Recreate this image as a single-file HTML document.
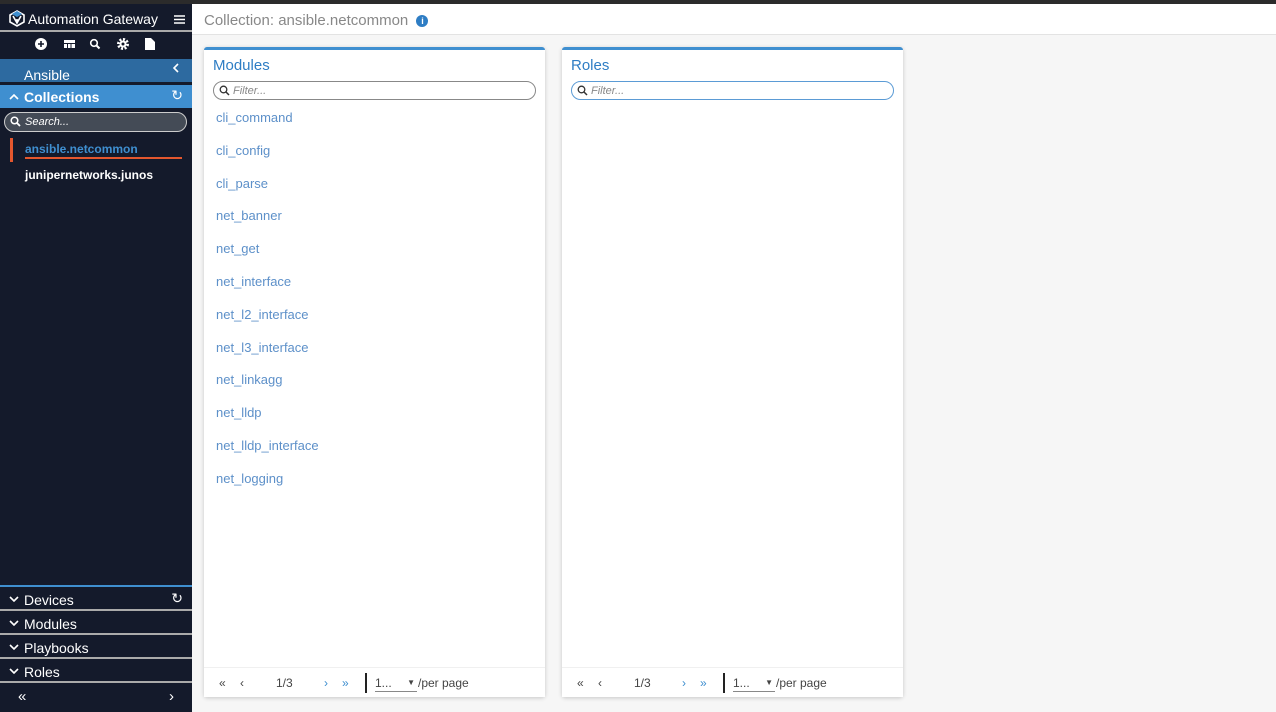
<!DOCTYPE html>
<html><head><style>
*{box-sizing:border-box;margin:0;padding:0}
body{width:1276px;height:712px;overflow:hidden;font-family:"Liberation Sans",sans-serif;background:#f7f7f7;position:relative}
.top{position:absolute;left:0;top:0;width:1276px;height:4px;background:#2b2b2b}
.sb{position:absolute;left:0;top:4px;width:192px;height:708px;background:#141a2b;color:#fff}
.main{position:absolute;left:192px;top:4px;width:1084px;height:708px;background:#f6f6f6}
.hdr{height:31px;background:#fff;border-bottom:1px solid #e3e3e3;font-size:15px;color:#888;padding:8px 0 0 12px}
.card{position:absolute;top:43px;width:341px;height:650px;background:#fff;border-top:3px solid #3f8fd0;border-radius:3px;box-shadow:0 1px 4px rgba(0,0,0,.2)}
.card h2{font-weight:normal;font-size:15px;color:#2e7dc4;margin:7px 0 0 9px}
.filt{margin:7px 9px 0 9px;height:19px;border:1px solid #888;border-radius:10px;font-size:11px;font-style:italic;color:#888;padding:3px 0 0 19px;position:relative}
.filt svg{position:absolute;left:5px;top:3px}
.card ul{list-style:none;margin-top:10px}
.card li{font-size:13px;color:#5d90c9;height:32.8px;padding-left:12px}
.ft{position:absolute;bottom:0;left:0;right:0;height:30px;background:#fff;border-top:1px solid #f0f0f0;font-size:12px;color:#444}
.ft span{position:absolute;top:8px}
.sec{position:absolute;left:0;width:192px;height:22px;font-size:14px;padding:4px 0 0 24px}
.chev{position:absolute;left:9px;top:8px}
</style></head><body>
<div class="top"></div>
<div class="sb">
 <div style="height:28px;border-bottom:2px solid #aaa;font-size:14px;padding:7px 0 0 28px;position:relative">
  <svg style="position:absolute;left:9px;top:6px" width="16" height="17" viewBox="0 0 16 17"><path d="M8 1L15 5V12L8 16L1 12V5Z M4 6L8 13L12 6 M8 9V13" fill="none" stroke="#fff" stroke-width="1.6"/><path d="M3 4L8 1L13 4L8 7Z" fill="#3f8fd0"/></svg>
  Automation Gateway
  <svg style="position:absolute;right:7px;top:11px" width="11" height="9" viewBox="0 0 11 9"><path d="M0 1H11M0 4.5H11M0 8H11" stroke="#fff" stroke-width="1.6"/></svg></div>
 <div style="height:24px;position:relative">
  <svg style="position:absolute;left:35px;top:5px" width="122" height="14" viewBox="0 0 122 14">
   <circle cx="6" cy="7" r="6" fill="#fff"/><path d="M6 4V10M3 7H9" stroke="#141a2b" stroke-width="1.6"/>
   <rect x="29" y="3" width="11" height="8" fill="#fff"/><path d="M29 6.5H40M32.5 6.5V11M36 6.5V11" stroke="#141a2b" stroke-width="1"/>
   <circle cx="59" cy="6" r="3.3" fill="none" stroke="#fff" stroke-width="1.6"/><path d="M61.5 8.5L64.5 11.5" stroke="#fff" stroke-width="2"/>
   <circle cx="88" cy="7" r="4.5" fill="none" stroke="#fff" stroke-width="3" stroke-dasharray="2 1.5"/><circle cx="88" cy="7" r="3.5" fill="#fff"/><circle cx="88" cy="7" r="1.5" fill="#141a2b"/>
   <path d="M110 1H116L120 5V13H110Z" fill="#fff"/>
  </svg></div>
 <div style="position:absolute;top:55px;height:23px;width:192px;background:#2d6aa0;font-size:14px;padding:8px 0 0 24px">Ansible<svg style="position:absolute;right:13px;top:4px" width="6" height="10"><path d="M5 1L1 5L5 9" fill="none" stroke="#fff" stroke-width="1.6"/></svg></div>
 <div style="position:absolute;top:81px;height:23px;width:192px;background:#3f8fd0;font-size:14px;font-weight:bold;padding:4px 0 0 24px"><svg style="position:absolute;left:9px;top:9px" width="10" height="6"><path d="M1 5L5 1L9 5" fill="none" stroke="#fff" stroke-width="1.6"/></svg>Collections<span style="position:absolute;right:9px;top:2px;font-weight:normal">↻</span></div>
 <div style="position:absolute;top:108px;left:4px;width:183px;height:20px;border:1px solid #ccc;border-radius:10px;background:#444b56;font-size:11px;font-style:italic;padding:3px 0 0 20px">Search...<svg style="position:absolute;left:5px;top:3px" width="11" height="11"><circle cx="4.5" cy="4.5" r="3.3" fill="none" stroke="#fff" stroke-width="1.5"/><path d="M7 7L10 10" stroke="#fff" stroke-width="1.8"/></svg></div>
 <div style="position:absolute;top:134px;left:10px;width:3px;height:24px;background:#e4572e"></div>
 <div style="position:absolute;top:138px;left:25px;font-size:12px;font-weight:bold;color:#3f8fd0">ansible.netcommon</div>
 <div style="position:absolute;top:153px;left:25px;width:157px;height:2px;background:#e4572e"></div>
 <div style="position:absolute;top:164px;left:25px;font-size:12px;font-weight:bold">junipernetworks.junos</div>
 <div style="position:absolute;top:581px;width:192px;height:2px;background:#3f8fd0"></div>
 <div class="sec" style="top:584px"><svg class="chev" width="10" height="6"><path d="M1 1L5 5L9 1" fill="none" stroke="#fff" stroke-width="1.6"/></svg>Devices<span style="position:absolute;right:9px;top:2px">↻</span></div>
 <div style="position:absolute;top:605px;width:192px;height:2px;background:#aaa"></div>
 <div class="sec" style="top:608px"><svg class="chev" width="10" height="6"><path d="M1 1L5 5L9 1" fill="none" stroke="#fff" stroke-width="1.6"/></svg>Modules</div>
 <div style="position:absolute;top:629px;width:192px;height:2px;background:#aaa"></div>
 <div class="sec" style="top:632px"><svg class="chev" width="10" height="6"><path d="M1 1L5 5L9 1" fill="none" stroke="#fff" stroke-width="1.6"/></svg>Playbooks</div>
 <div style="position:absolute;top:653px;width:192px;height:2px;background:#aaa"></div>
 <div class="sec" style="top:656px"><svg class="chev" width="10" height="6"><path d="M1 1L5 5L9 1" fill="none" stroke="#fff" stroke-width="1.6"/></svg>Roles</div>
 <div style="position:absolute;top:677px;width:192px;height:2px;background:#aaa"></div>
 <div style="position:absolute;top:684px;left:18px;font-size:15px">«</div>
 <div style="position:absolute;top:684px;left:169px;font-size:15px">›</div>
</div>
<div class="main">
 <div class="hdr">Collection: ansible.netcommon <span style="display:inline-block;width:12px;height:12px;border-radius:50%;background:#2e7dc4;color:#fff;font-size:9px;text-align:center;font-weight:bold;line-height:12px;vertical-align:1px;margin-left:4px">i</span></div>
 <div class="card" style="left:12px">
  <h2>Modules</h2>
  <div class="filt"><svg width="11" height="11"><circle cx="4.5" cy="4.5" r="3.3" fill="none" stroke="#333" stroke-width="1.3"/><path d="M7 7L10 10" stroke="#333" stroke-width="1.5"/></svg>Filter...</div>
  <ul><li>cli_command</li><li>cli_config</li><li>cli_parse</li><li>net_banner</li><li>net_get</li><li>net_interface</li><li>net_l2_interface</li><li>net_l3_interface</li><li>net_linkagg</li><li>net_lldp</li><li>net_lldp_interface</li><li>net_logging</li></ul>
  <div class="ft"><span style="left:15px">«</span><span style="left:36px">‹</span><span style="left:72px">1/3</span><span style="left:120px;color:#3f8fd0">›</span><span style="left:138px;color:#3f8fd0">»</span><span style="left:161px;top:5px;width:2px;height:20px;background:#222"></span><span style="left:171px;width:42px;border-bottom:1px solid #888;height:16px">1...<span style="position:absolute;right:2px;top:2px;font-size:8px">▼</span></span><span style="left:214px">/per page</span></div>
 </div>
 <div class="card" style="left:370px">
  <h2>Roles</h2>
  <div class="filt" style="border-color:#5b9bd5"><svg width="11" height="11"><circle cx="4.5" cy="4.5" r="3.3" fill="none" stroke="#333" stroke-width="1.3"/><path d="M7 7L10 10" stroke="#333" stroke-width="1.5"/></svg>Filter...</div>
  <div class="ft"><span style="left:15px">«</span><span style="left:36px">‹</span><span style="left:72px">1/3</span><span style="left:120px;color:#3f8fd0">›</span><span style="left:138px;color:#3f8fd0">»</span><span style="left:161px;top:5px;width:2px;height:20px;background:#222"></span><span style="left:171px;width:42px;border-bottom:1px solid #888;height:16px">1...<span style="position:absolute;right:2px;top:2px;font-size:8px">▼</span></span><span style="left:214px">/per page</span></div>
 </div>
</div>
</body></html>
